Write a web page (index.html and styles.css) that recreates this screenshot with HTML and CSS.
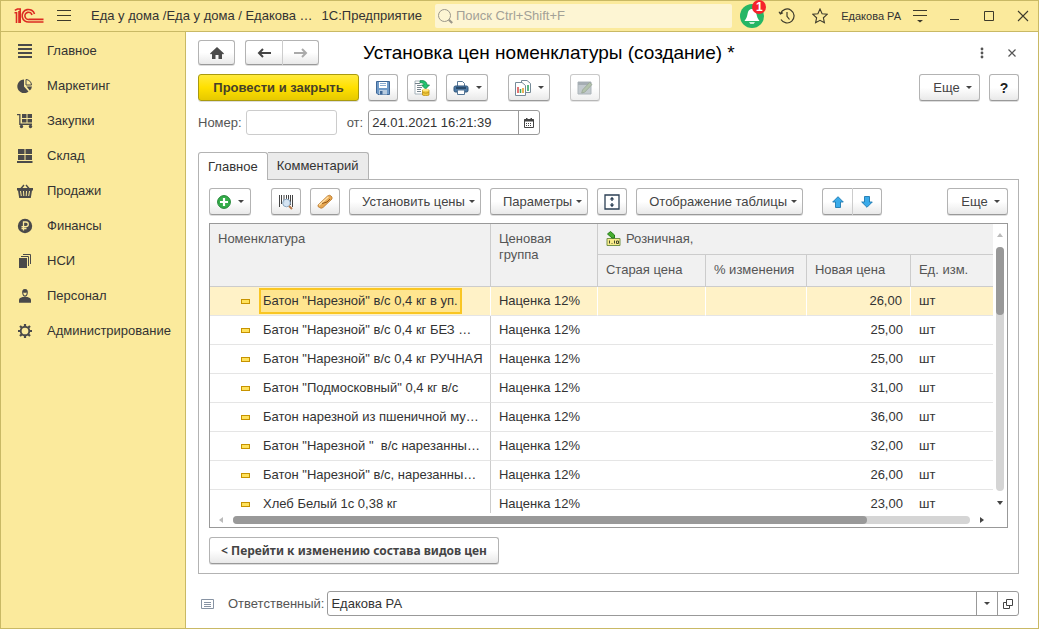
FILE: index.html
```html
<!DOCTYPE html>
<html lang="ru">
<head>
<meta charset="utf-8">
<title>Установка цен номенклатуры (создание)</title>
<link rel="stylesheet" href="styles.css">
</head>
<body>
<div class="window">
  <header class="topbar">
    <svg class="logo" width="30" height="16" viewBox="0 0 30 16" fill="none" stroke="#dc2b22" stroke-width="1.6"><path d="M0.5 4.8H2.5V15M0.8 2.4 3.4 1H6.2V15M5 3V15"/><path d="M20.5 6A6.3 6.3 0 1 0 15.2 14H29.5"/><path d="M18 7A3.6 3.6 0 1 0 15.2 11.4H29.5"/></svg>
    <button class="plain menu-btn" aria-label="Меню"><svg width="14" height="12" viewBox="0 0 14 12" stroke="#3d3a2b"><path d="M0 .5H14M0 5.5H14M0 10.5H14"/></svg></button>
    <span class="app-title">Еда у дома /Еда у дома / Едакова …</span>
    <span class="app-name">1С:Предприятие</span>
    <label class="search">
      <svg width="17" height="17" viewBox="0 0 17 17" fill="none" stroke="#9b978a"><circle cx="7.5" cy="7.5" r="6"/><path d="m11.8 11.8 3.4 3.2" stroke-width="2.2"/></svg>
      <input type="text" placeholder="Поиск Ctrl+Shift+F" aria-label="Поиск">
    </label>
    <button class="plain bell" aria-label="Уведомления">
      <svg width="24" height="24" viewBox="0 0 24 24"><circle cx="12" cy="12" r="12" fill="#25b665"/><path d="M12 5c-3 0-4 2.400-4.500 5.300C7 13 6.300 14.500 4.500 17H19.500C17.700 14.500 17 13 16.500 10.300 16 7.400 15 5 12 5Z" fill="#fff"/><path d="M9 18.300h6l-1.400 1.500h-3.200Z" fill="#fff"/></svg>
      <span class="badge">1</span>
    </button>
    <button class="plain" aria-label="История"><svg width="17" height="16" viewBox="0 0 17 16" fill="none" stroke="#3d3a2b" stroke-width="1.200"><path d="M2.500 5.500A7 7 0 1 1 3 11.500M1 3.800 2.400 6 5 4.800M9 4V8.300L11.500 11.500"/></svg></button>
    <button class="plain star" aria-label="Избранное"><svg width="16" height="16" viewBox="0 0 16 16" fill="none" stroke="#3d3a2b" stroke-width="1.100"><path d="m8 1 2.100 4.700 5.100.6-3.800 3.500 1 5L8 12.300 3.600 14.800l1-5L.8 6.300l5.100-.6Z"/></svg></button>
    <span class="user">Едакова РА</span>
    <button class="plain service" aria-label="Сервис"><svg width="14" height="14" viewBox="0 0 14 14" stroke="#3d3a2b" fill="#3d3a2b"><path d="M0 1.500H14M0 6.500H14"/><path d="M4 11h6l-3 2.500Z" stroke="none"/></svg></button>
    <span class="win-controls">
      <button class="plain" aria-label="Свернуть"><svg width="12" height="12" viewBox="0 0 12 12" stroke="#3d3a2b"><path d="M1 9.500H10"/></svg></button>
      <button class="plain" aria-label="Развернуть"><svg width="12" height="12" viewBox="0 0 12 12" stroke="#3d3a2b" fill="none"><path d="M1.500 1.500h9v9h-9Z"/></svg></button>
      <button class="plain" aria-label="Закрыть окно"><svg width="12" height="12" viewBox="0 0 12 12" stroke="#3d3a2b" stroke-width="1.100"><path d="m1 1 10 10M11 1 1 11"/></svg></button>
    </span>
  </header>

  <div class="body">
    <nav class="sidebar">
      <a href="#"><svg width="16" height="16" viewBox="0 0 16 16" fill="#4a4a4a"><path d="M1 1h14v2H1ZM1 5h14v2H1ZM1 9h14v2H1ZM1 13h14v2H1Z"/></svg>Главное</a>
      <a href="#"><svg width="16" height="16" viewBox="0 0 16 16" fill="#4a4a4a"><path d="M7 1.500V8.500L11.500 13.500A6.800 6.800 0 1 1 7 1.500Z"/><path d="M9 1.500V7h5.500A5.700 5.700 0 0 0 9 1.500Z" fill="none" stroke="#4a4a4a"/><path d="M9.500 8.500h5.500a6 6 0 0 1-2.200 4Z"/></svg>Маркетинг</a>
      <a href="#"><svg width="16" height="16" viewBox="0 0 16 16" fill="#4a4a4a"><path d="M0 1h3.500v9.500H15V12H2.200V2.300H0ZM5 1h4.500v4H5ZM10.500 1H15v4h-4.500ZM5 6h4.500v3.500H5ZM10.500 6H15v3.500h-4.500Z"/><circle cx="4.500" cy="13.500" r="1.700"/><circle cx="13.500" cy="13.500" r="1.700"/></svg>Закупки</a>
      <a href="#"><svg width="16" height="16" viewBox="0 0 16 16" fill="#4a4a4a"><path d="M1 1h6.500v5H1ZM8.500 1H15v5H8.500ZM1 7h6.500v5H1ZM8.500 7H15v5H8.500ZM0 13h15.500v2H0Z"/></svg>Склад</a>
      <a href="#"><svg width="16" height="16" viewBox="0 0 16 16" fill="#4a4a4a"><path d="M4 5.500 7 2M12 5.500 9 2" stroke="#4a4a4a" stroke-width="1.400"/><path d="M0 5h16v2.500H15L13.800 15H2.200L1 7.500H0Z"/><path d="m3.500 8 .8 5M6.500 8l.3 5M9.500 8l-.3 5M12.500 8l-.8 5" stroke="#fbea9c"/></svg>Продажи</a>
      <a href="#"><svg width="16" height="16" viewBox="0 0 16 16"><circle cx="8" cy="8" r="7.200" fill="#4a4a4a"/><path d="M6.500 12.500V4H9a2.300 2.300 0 0 1 0 4.600H4.500M4.500 10.500H9.500" fill="none" stroke="#fbea9c" stroke-width="1.300"/></svg>Финансы</a>
      <a href="#"><svg width="16" height="16" viewBox="0 0 16 16" fill="#4a4a4a"><path d="M2 5h8v10H2Z"/><path d="M4 3.500h7.500V13M6 1.500h7.500V11" fill="none" stroke="#4a4a4a"/></svg>НСИ</a>
      <a href="#"><svg width="16" height="16" viewBox="0 0 16 16" fill="#4a4a4a"><path d="M8 1C5.500 1 5 2.800 5.200 5 5.400 7 6.500 8.800 8 8.800S10.600 7 10.800 5C11 2.800 10.500 1 8 1ZM2 14.800V12C2 10 4 9.500 5.500 9h5C12 9.500 14 10 14 12v2.800Z"/><path d="M6.300 4.500c1 .4 2.400.4 3.400 0 0 1.700-.7 3-1.700 3S6.300 6.200 6.300 4.500" fill="#fbea9c"/></svg>Персонал</a>
      <a href="#"><svg width="16" height="16" viewBox="0 0 16 16" fill="none" stroke="#4a4a4a"><circle cx="8" cy="8" r="4.300" stroke-width="1.900"/><path d="M8 1V3.500M8 12.500V15M1 8H3.500M12.500 8H15M3 3 4.800 4.800M11.200 11.200 13 13M3 13 4.800 11.200M11.200 4.800 13 3" stroke-width="2.200"/></svg>Администрирование</a>
    </nav>

    <main class="form">
      <div class="bar title-row">
        <button class="btn icon-btn home" aria-label="Домой"><svg width="14" height="12" viewBox="0 0 14 12" fill="#4a4a4a"><path d="M7 0 14 6.500 13 7.500 12 6.700V12H8.500V8h-3v4H2V6.700L1 7.500 0 6.500Z"/></svg></button>
        <div class="group">
          <button class="btn" aria-label="Назад"><svg width="14" height="10" viewBox="0 0 14 10" fill="none" stroke="#444" stroke-width="2"><path d="M14 5H2M6 1 2 5 6 9"/></svg></button>
          <button class="btn" aria-label="Вперед" disabled><svg width="14" height="10" viewBox="0 0 14 10" fill="none" stroke="#aaa" stroke-width="2"><path d="M0 5H12M8 1 12 5 8 9"/></svg></button>
        </div>
        <h1>Установка цен номенклатуры (создание) *</h1>
        <button class="plain dots push" aria-label="Действия"><svg width="4" height="12" viewBox="0 0 4 12" fill="#555"><circle cx="2" cy="2" r="1.400"/><circle cx="2" cy="6" r="1.400"/><circle cx="2" cy="10" r="1.400"/></svg></button>
        <button class="plain close" aria-label="Закрыть"><svg width="8" height="8" viewBox="0 0 8 8" stroke="#555" stroke-width="1.200"><path d="m.5.5 7 7M7.500.5l-7 7"/></svg></button>
      </div>

      <div class="bar commands">
        <button class="btn primary">Провести и закрыть</button>
        <button class="btn icon-btn" aria-label="Записать"><svg width="16" height="16" viewBox="0 0 16 16"><path d="M1.500 1.500h13v13H3L1.500 13Z" fill="#6f9ac8" stroke="#3f6796"/><path d="M4 2h8v6H4Z" fill="#fff"/><path d="M5 3.500h6M5 5.500h6" stroke="#8bacd0"/><path d="M4 10h8v4.500H4Z" fill="#b8cce0"/><path d="M5 11h2.500v3.500H5Z" fill="#3f6796"/></svg></button>
        <button class="btn icon-btn" aria-label="Провести"><svg width="16" height="16" viewBox="0 0 16 16"><path d="M1 1h8l3 3v10H1Z" fill="#fff" stroke="#a6b3bb"/><path d="M1 3.500h5M3 5.500h4M3 7.500h5M3 9.500h4M3 11.500h4" stroke="#75838c"/><path d="M6 .8c4-.8 7 1 7 4.200h2.500L11.500 9 7.500 5H10C10 3.500 8.500 2.500 6 2.800Z" fill="#20c56f" stroke="#128646" stroke-width=".8"/><path d="M8.500 10v5c1.500 1 5 1 6.500 0v-5Z" fill="#f0c93c" stroke="#b98d16" stroke-width=".8"/><ellipse cx="11.700" cy="10" rx="3.200" ry="1.200" fill="#ffe783"/><path d="M8.500 12.500q3.200 1.400 6.500 0" fill="none" stroke="#b98d16" stroke-width=".8"/></svg></button>
        <button class="btn drop" aria-label="Печать"><svg width="16" height="16" viewBox="0 0 16 16"><path d="M4.500 6V1.500h5l2 2V6" fill="#fff" stroke="#557696"/><rect x="1" y="6" width="14" height="6" rx="1.500" fill="#4c79a6" stroke="#2f5579"/><path d="M3 8h10" stroke="#1e3c59" stroke-width="1.500"/><path d="M4.500 10h7v4.500h-7Z" fill="#fff" stroke="#557696"/></svg><i class="caret"></i></button>
        <button class="btn drop reports" aria-label="Отчеты"><svg width="16" height="16" viewBox="0 0 16 16"><path d="M6.500.5H12l3.500 3v9h-9Z" fill="#fff" stroke="#768a98"/><path d="M13 5v6" stroke="#24a05a" stroke-width="1.500"/><path d="M.5 2.500H7l3.500 3v10H.5Z" fill="#fff" stroke="#768a98"/><path d="M3 7v6" stroke="#d44" stroke-width="1.500"/><path d="M5.500 9v4" stroke="#39a75b" stroke-width="1.500"/><path d="M8 8v5" stroke="#e59a22" stroke-width="1.500"/></svg><i class="caret"></i></button>
        <button class="btn icon-btn edit" aria-label="Редактировать" disabled><svg width="16" height="16" viewBox="0 0 16 16"><path d="M1 2h13v12H1Z" fill="#a9b3ba" stroke="#8a969d"/><path d="M1 2h13v3H1Z" fill="#7f8b93"/><path d="m5.500 10 7-7.500 2.500 2-7.300 7.700-3 .8Z" fill="#93aa8a" stroke="#6f826a" stroke-width=".8"/></svg></button>
        <button class="btn more push">Еще<i class="caret"></i></button>
        <button class="btn icon-btn help">?</button>
      </div>

      <div class="bar fields">
        <label for="num">Номер:</label>
        <input class="field number" id="num" type="text">
        <label for="date">от:</label>
        <div class="combo date"><input id="date" type="text" value="24.01.2021 16:21:39"><button aria-label="Календарь"><svg width="10" height="10" viewBox="0 0 10 10"><path d="M.5 1.500h9v8h-9Z" fill="none" stroke="#444"/><path d="M.5 1h9v2.500h-9ZM2 0h1.500v2H2ZM6.500 0H8v2H6.500Z" fill="#444"/><path d="M2 5.500h6M2 7.500h6" stroke="#444" stroke-dasharray="1 1"/></svg></button></div>
      </div>

      <div class="tabs" role="tablist">
        <button class="tab active" role="tab" aria-selected="true">Главное</button>
        <button class="tab" role="tab" aria-selected="false">Комментарий</button>
      </div>

      <section class="panel">
        <div class="bar tools">
          <button class="btn drop add" aria-label="Добавить"><svg width="14" height="14" viewBox="0 0 14 14"><circle cx="7" cy="7" r="6.400" fill="#35ad4a" stroke="#218436"/><path d="M7 3v8M3 7h8" stroke="#fff" stroke-width="2.200"/></svg><i class="caret"></i></button>
          <button class="btn icon-btn" aria-label="Поиск по штрихкоду"><svg width="16" height="16" viewBox="0 0 16 16"><path d="M1.500 1v12M3.500 1v9M6 1v8M8.500 1v4M10.500 1v5M12.500 1v10M14.500 1v12" stroke="#444"/><circle cx="8.500" cy="9" r="3.800" fill="#cfe1f2" fill-opacity=".9" stroke="#8da9c2"/><path d="m11 12 3 3" stroke="#b67a4d" stroke-width="2"/></svg></button>
          <button class="btn icon-btn" aria-label="Заполнить"><svg width="16" height="16" viewBox="0 0 16 16"><path d="M1 11 10.500 2q2.500-1.500 3.500 0 1.500.5 1 3L6 13.500q-2 1.500-3.500 0Q.5 13 1 11Z" fill="#e8a852" stroke="#b6762c" stroke-width=".8"/><path d="M2 11.200 11.500 2.800" stroke="#ffe1a8" stroke-width="1.300"/><path d="m5 9.500 5-1.500 3-3" fill="none" stroke="#925717"/></svg></button>
          <button class="btn text">Установить цены<i class="caret"></i></button>
          <button class="btn text">Параметры<i class="caret"></i></button>
          <button class="btn icon-btn" aria-label="Высота строк"><svg width="16" height="16" viewBox="0 0 16 16"><path d="M1 1h14v14H1Z" fill="#fff" stroke="#2b3f54" stroke-width="1.300"/><path d="M8 4v3M8 9v3" stroke="#2b3f54" stroke-width="1.300"/><path d="M8 2.800 10.300 5.500H5.700ZM8 13.200 10.300 10.500H5.700Z" fill="#2b3f54"/></svg></button>
          <button class="btn text">Отображение таблицы<i class="caret"></i></button>
          <div class="group updown">
            <button class="btn" aria-label="Вверх"><svg width="12" height="12" viewBox="0 0 12 12"><path d="M6 .7 11.300 6H8.500v5.500h-5V6H.7Z" fill="#39abea" stroke="#1d78b0" stroke-width=".9"/></svg></button>
            <button class="btn" aria-label="Вниз"><svg width="12" height="12" viewBox="0 0 12 12"><path d="M6 11.300.7 6h2.800V.5h5V6h2.800Z" fill="#39abea" stroke="#1d78b0" stroke-width=".9"/></svg></button>
          </div>
          <button class="btn more push">Еще<i class="caret"></i></button>
        </div>

        <div class="grid">
          <div class="grid-view">
            <table>
              <colgroup><col><col class="c-group"><col class="c-old"><col class="c-pct"><col class="c-new"><col class="c-unit"></colgroup>
              <thead>
                <tr><th rowspan="2">Номенклатура</th><th rowspan="2">Ценовая<br>группа</th><th colspan="4"><span class="price-type"><svg width="15" height="15" viewBox="0 0 15 15"><path d="M1 7.500h13v7H1Z" fill="#f8eb8a" stroke="#74934a"/><path d="M3.500 9.500v3M6 12v.8M8.500 9.500v3M10.500 10v2.500h2V10Z" fill="none" stroke="#44482b"/><path d="m1.500 3 3-2.500 4 3.500v3H6Z" fill="#48ae30" stroke="#267b18"/></svg>Розничная,</span></th></tr>
                <tr><th>Старая цена</th><th>% изменения</th><th>Новая цена</th><th>Ед. изм.</th></tr>
              </thead>
              <tbody>
                <tr class="selected"><td class="name"><i></i><span>Батон "Нарезной" в/с 0,4 кг в уп.</span></td><td>Наценка 12%</td><td></td><td></td><td class="num">26,00</td><td>шт</td></tr>
                <tr><td class="name"><i></i><span>Батон "Нарезной" в/с 0,4 кг БЕЗ …</span></td><td>Наценка 12%</td><td></td><td></td><td class="num">25,00</td><td>шт</td></tr>
                <tr><td class="name"><i></i><span>Батон "Нарезной" в/с 0,4 кг РУЧНАЯ</span></td><td>Наценка 12%</td><td></td><td></td><td class="num">25,00</td><td>шт</td></tr>
                <tr><td class="name"><i></i><span>Батон "Подмосковный" 0,4 кг в/с</span></td><td>Наценка 12%</td><td></td><td></td><td class="num">31,00</td><td>шт</td></tr>
                <tr><td class="name"><i></i><span>Батон нарезной из пшеничной му…</span></td><td>Наценка 12%</td><td></td><td></td><td class="num">36,00</td><td>шт</td></tr>
                <tr><td class="name"><i></i><span>Батон "Нарезной "&nbsp; в/с нарезанны…</span></td><td>Наценка 12%</td><td></td><td></td><td class="num">32,00</td><td>шт</td></tr>
                <tr><td class="name"><i></i><span>Батон "Нарезной" в/с, нарезанны…</span></td><td>Наценка 12%</td><td></td><td></td><td class="num">26,00</td><td>шт</td></tr>
                <tr><td class="name"><i></i><span>Хлеб Белый 1с 0,38 кг</span></td><td>Наценка 12%</td><td></td><td></td><td class="num">23,00</td><td>шт</td></tr>
              </tbody>
            </table>
          </div>
          <div class="vscroll"><i class="arrow up"></i><div class="track"><div class="thumb"></div></div><i class="arrow down"></i></div>
          <div class="hscroll"><i class="arrow left"></i><div class="track"><div class="thumb"></div></div><i class="arrow right"></i></div>
        </div>

        <button class="btn goto">&lt; Перейти к изменению состава видов цен</button>
      </section>

      <div class="bar footer">
        <svg width="14" height="12" viewBox="0 0 14 12" fill="none" stroke="#8793a3"><path d="M.5 1.500h12v9H.5ZM3 4.500h7M3 6.500h7M3 8.500h7"/></svg>
        <label for="resp">Ответственный:</label>
        <div class="combo resp"><input id="resp" type="text" value="Едакова РА"><button aria-label="Выбрать"><i class="caret"></i></button><button aria-label="Открыть"><svg width="10" height="10" viewBox="0 0 10 10" fill="none" stroke="#444"><path d="M3.500.5h6v6h-6ZM3.500 3.500h-3v6h6v-3"/></svg></button></div>
      </div>
    </main>
  </div>
</div>
</body>
</html>
```

FILE: styles.css
```css
* { box-sizing: border-box; }

body {
  margin: 0;
  font: 13px/16px "Liberation Sans", Arial, sans-serif;
  color: #333;
}

button, input {
  font: inherit;
  color: inherit;
}

svg { flex: none; display: block; }

.window {
  height: 100vh;
  display: flex;
  flex-direction: column;
  border: 1px solid #c9b965;
  background: #fff;
}

/* top bar */
.topbar {
  height: 31px;
  flex: none;
  display: flex;
  align-items: center;
  padding: 0 9px 0 13px;
  background: #fbea9c;
  border-bottom: 1px solid #c9b965;
}

.plain {
  display: flex;
  padding: 0;
  border: 0;
  background: none;
}

.menu-btn { margin: 0 20px 0 13px; }
.app-name { margin-left: 9px; }
.app-title, .app-name, .user { white-space: nowrap; }

.search {
  flex: 1;
  height: 24px;
  display: flex;
  align-items: center;
  gap: 2px;
  margin: 0 8px 0 13px;
  padding-left: 2px;
  border-radius: 2px;
  background: #fdf5d3;
}

.search input {
  flex: 1;
  min-width: 0;
  padding: 0;
  border: 0;
  background: none;
}

.search input::placeholder { color: #a3a197; opacity: 1; }

.bell { position: relative; margin-right: 14px; }

.badge {
  position: absolute;
  top: -4px;
  right: -2px;
  width: 14px;
  height: 14px;
  border-radius: 50%;
  background: #f6232b;
  color: #fff;
  font-weight: bold;
  font-size: 12px;
  line-height: 14px;
}

.star { margin: 0 13px 0 17px; }
.user { font-size: 11px; }
.service { margin: 0 22px 0 12px; }
.win-controls { display: flex; gap: 22px; }

/* sidebar */
.body { flex: 1; min-height: 0; display: flex; }

.sidebar {
  flex: none;
  width: 185px;
  padding-top: 1px;
  background: #fbea9c;
  border-right: 1px solid #c9b965;
}

.sidebar a {
  height: 35px;
  display: flex;
  align-items: center;
  gap: 14px;
  padding-left: 16px;
  color: #333;
  text-decoration: none;
}

/* form */
.form {
  flex: 1;
  min-width: 0;
  display: flex;
  flex-direction: column;
  padding: 8px 19px 12px 12px;
}

.bar { display: flex; flex: none; align-items: center; }
.push { margin-left: auto; }

.btn {
  height: 27px;
  flex: none;
  display: flex;
  align-items: center;
  justify-content: center;
  padding: 0;
  border: 1px solid #b3b3b3;
  border-bottom-color: #999;
  border-radius: 3px;
  background: linear-gradient(#fff 50%, #e9e9e9);
  box-shadow: 0 1px 0 #ddd;
  color: #444;
}

.icon-btn { width: 30px; }
.drop { width: 42px; gap: 7px; }
.text { padding: 0 5px 0 12px; gap: 4px; }
.more { width: 61px; gap: 6px; padding-left: 6px; }
.help { font-weight: bold; font-size: 14px; color: #222; }

.caret {
  flex: none;
  border: 3px solid transparent;
  border-top-color: #444;
  border-bottom: 0;
}

.group { display: flex; }
.group .btn { width: 38px; height: 25px; }
.group .btn:first-child { border-radius: 3px 0 0 3px; border-right: 0; }
.group .btn:last-child { border-radius: 0 3px 3px 0; border-left-color: #ccc; }

.home { width: 37px; height: 25px; margin-right: 10px; }
.title-row .group .btn { width: 37px; }

h1 {
  margin: 0 0 0 44px;
  font-size: 19px;
  line-height: 24px;
  font-weight: normal;
  color: #000;
  white-space: nowrap;
}

.dots { margin-right: 24px; }
.close { margin-right: 3px; }

.commands { margin-top: 9px; gap: 9px; }
.primary {
  width: 161px;
  border-color: #a99a0e;
  background: linear-gradient(#ffea3d, #ffe000 50%, #e6c900);
  font-weight: bold;
  color: #46402a;
}
.reports { margin-left: 11px; }
.edit { margin-left: 11px; opacity: .7; }

.fields { margin-top: 9px; }
.fields label, .footer label { color: #555; }

.field, .combo {
  height: 25px;
  border: 1px solid #999;
  border-radius: 3px;
  background: #fff;
}

.number { width: 91px; margin: 0 10px 0 4px; border-color: #ccc; }

.combo { display: flex; }
.combo input {
  flex: 1;
  min-width: 0;
  padding: 0 3px;
  border: 0;
  background: none;
}
.combo button {
  width: 21px;
  display: flex;
  align-items: center;
  justify-content: center;
  padding: 0;
  border: 0;
  border-left: 1px solid #999;
  background: none;
}
.date { width: 172px; margin-left: 5px; }

/* tabs */
.tabs { display: flex; flex: none; margin-top: 17px; }

.tab {
  height: 27px;
  padding: 0 9px;
  border: 1px solid #b3b3b3;
  border-bottom: 0;
  border-left: 0;
  border-radius: 0 3px 0 0;
  background: #ebebeb;
}

.tab.active {
  z-index: 1;
  height: 28px;
  margin-bottom: -1px;
  border-left: 1px solid #b3b3b3;
  border-radius: 3px 3px 0 0;
  background: #fff;
}

.panel {
  flex: 1;
  min-height: 0;
  display: flex;
  flex-direction: column;
  align-items: flex-start;
  padding: 8px 10px 9px;
  border: 1px solid #b3b3b3;
}

.tools { align-self: stretch; gap: 9px; }
.add { margin-right: 11px; }
.updown { margin-left: 10px; }
.updown .btn { height: 27px; width: 30px; }

/* price table */
.grid {
  flex: 1;
  min-height: 0;
  align-self: stretch;
  display: grid;
  grid-template: minmax(0, 1fr) 14px / minmax(0, 1fr) 14px;
  margin: 8px 0 9px;
  border: 1px solid #999;
}

.grid-view { overflow: hidden; }

table {
  width: 100%;
  table-layout: fixed;
  border-collapse: separate;
  border-spacing: 0;
}

.c-group { width: 107px; }
.c-old { width: 108px; }
.c-pct { width: 101px; }
.c-new { width: 104px; }
.c-unit { width: 82px; }

th {
  height: 31px;
  padding: 7px 8px;
  border-right: 1px solid #ccc;
  border-bottom: 1px solid #ccc;
  background: #f1f1f1;
  color: #555;
  font-weight: normal;
  text-align: left;
  vertical-align: top;
  white-space: nowrap;
}

thead tr:first-child th:last-child, tr:last-child th:last-child { border-right: 0; }
thead tr:last-child th { height: 32px; }

.price-type { display: flex; gap: 5px; }

td {
  height: 29px;
  padding: 0 8px;
  border-bottom: 1px solid #e5e5e5;
  white-space: nowrap;
}

td:first-child { border-right: 1px solid #ccc; }

.selected td {
  background: #fff2c7;
  border-right: 1px solid #fff;
}
.selected td:last-child { border-right: 0; }

.name { padding: 0 0 0 31px; }
.name span {
  display: inline-block;
  padding: 4px 3px;
  border: 1px solid transparent;
}
.selected .name span {
  padding: 3px 2px;
  border: 2px solid #f9c623;
  background: #ffe58f;
}
.name i {
  display: inline-block;
  width: 9px;
  height: 5px;
  margin-right: 9px;
  vertical-align: middle;
  border: 1px solid #c79300;
  background: #ffe25c;
}

.num { text-align: right; }

.vscroll, .hscroll { display: flex; align-items: center; }
.vscroll { flex-direction: column; padding: 9px 0 8px; gap: 10px; }
.hscroll { padding: 0 9px; gap: 10px; }

.track { flex: 1; border-radius: 4px; background: #d5d5d5; }
.thumb { border-radius: 4px; background: #999; }
.vscroll .track { width: 8px; }
.vscroll .thumb { height: 28%; }
.hscroll .track { height: 8px; }
.hscroll .thumb { width: 86%; height: 8px; }

.arrow { border: 3px solid transparent; }
.up { border-top: 0; border-bottom: 4px solid #bbb; }
.down { border-bottom: 0; border-top: 4px solid #444; }
.left { border-left: 0; border-right: 4px solid #bbb; }
.right { border-right: 0; border-left: 4px solid #444; }

.goto {
  padding: 0 11px;
  font: bold 12px/16px "Noto Sans", Verdana, sans-serif;
}

.footer { margin-top: 17px; padding-left: 3px; }
.footer label { margin: 0 3px 0 13px; }
.resp { flex: 1; }
```
